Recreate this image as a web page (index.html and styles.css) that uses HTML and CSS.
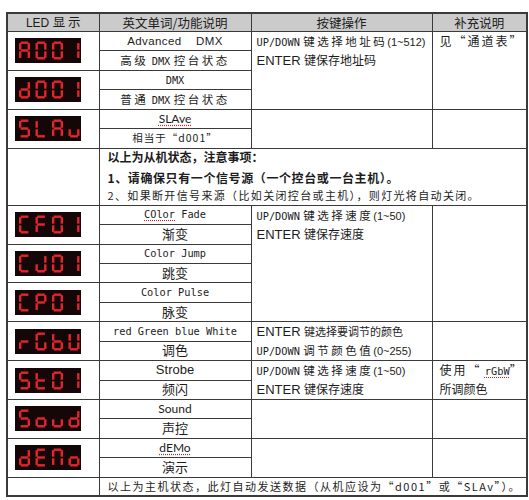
FILE: index.html
```html
<!DOCTYPE html>
<html lang="zh-CN">
<head>
<meta charset="utf-8">
<title>LED 显示</title>
<link rel="stylesheet" href="styles.css">
</head>
<body>
<svg class="defs" width="0" height="0" aria-hidden="true">
  <defs>
    <rect id="s-a" x="1.6" y="0" width="7.8" height="2.4"/>
    <rect id="s-b" x="8.6" y="1.6" width="2.4" height="6.6"/>
    <rect id="s-c" x="8.6" y="9.8" width="2.4" height="6.6"/>
    <rect id="s-d" x="1.6" y="15.6" width="7.8" height="2.4"/>
    <rect id="s-e" x="0" y="9.8" width="2.4" height="6.6"/>
    <rect id="s-f" x="0" y="1.6" width="2.4" height="6.6"/>
    <rect id="s-g" x="1.6" y="7.8" width="7.8" height="2.4"/>
    <g id="c-A"><use href="#s-a"/><use href="#s-b"/><use href="#s-c"/><use href="#s-e"/><use href="#s-f"/><use href="#s-g"/></g>
    <g id="c-0"><use href="#s-a"/><use href="#s-b"/><use href="#s-c"/><use href="#s-d"/><use href="#s-e"/><use href="#s-f"/></g>
    <g id="c-1"><use href="#s-b"/><use href="#s-c"/></g>
    <g id="c-d"><use href="#s-b"/><use href="#s-c"/><use href="#s-d"/><use href="#s-e"/><use href="#s-g"/></g>
    <g id="c-S"><use href="#s-a"/><use href="#s-c"/><use href="#s-d"/><use href="#s-f"/><use href="#s-g"/></g>
    <g id="c-L"><use href="#s-d"/><use href="#s-e"/><use href="#s-f"/></g>
    <g id="c-u"><use href="#s-c"/><use href="#s-d"/><use href="#s-e"/></g>
    <g id="c-C"><use href="#s-a"/><use href="#s-d"/><use href="#s-e"/><use href="#s-f"/></g>
    <g id="c-F"><use href="#s-a"/><use href="#s-e"/><use href="#s-f"/><use href="#s-g"/></g>
    <g id="c-J"><use href="#s-b"/><use href="#s-c"/><use href="#s-d"/><use href="#s-e"/></g>
    <g id="c-P"><use href="#s-a"/><use href="#s-b"/><use href="#s-e"/><use href="#s-f"/><use href="#s-g"/></g>
    <g id="c-r"><use href="#s-e"/><use href="#s-g"/></g>
    <g id="c-G"><use href="#s-a"/><use href="#s-c"/><use href="#s-d"/><use href="#s-e"/><use href="#s-f"/></g>
    <g id="c-b"><use href="#s-c"/><use href="#s-d"/><use href="#s-e"/><use href="#s-f"/><use href="#s-g"/></g>
    <g id="c-U"><use href="#s-b"/><use href="#s-c"/><use href="#s-d"/><use href="#s-e"/><use href="#s-f"/></g>
    <g id="c-t"><use href="#s-d"/><use href="#s-e"/><use href="#s-f"/><use href="#s-g"/></g>
    <g id="c-o"><use href="#s-c"/><use href="#s-d"/><use href="#s-e"/><use href="#s-g"/></g>
    <g id="c-E"><use href="#s-a"/><use href="#s-d"/><use href="#s-e"/><use href="#s-f"/><use href="#s-g"/></g>
    <g id="c-n"><use href="#s-a"/><use href="#s-b"/><use href="#s-c"/><use href="#s-e"/><use href="#s-f"/></g>
  </defs>
</svg>

<div class="page">
<table class="spec">
  <colgroup>
    <col class="w1"><col class="w2"><col class="w3"><col class="w4">
  </colgroup>
  <thead>
    <tr>
      <th><span class="lat">LED</span> <span class="zh">显 示</span></th>
      <th class="zh">英文单词/功能说明</th>
      <th class="zh">按键操作</th>
      <th class="zh">补充说明</th>
    </tr>
  </thead>
  <tbody>
    <tr>
      <td rowspan="2" class="led">
        <svg class="led-svg" viewBox="0 0 66 25" width="66" height="25"><rect class="led-bg" width="66" height="25"/><use href="#c-A" x="4" y="3.5"/><use href="#c-0" x="20.5" y="3.5"/><use href="#c-0" x="37" y="3.5"/><use href="#c-1" x="53.5" y="3.5"/></svg>
      </td>
      <td class="fn"><span class="adv">Advanced&nbsp;&nbsp;&nbsp;&nbsp;DMX</span></td>
      <td rowspan="4" class="op">
        <div><span class="mono">UP/DOWN</span> <span class="zh wide">键选择地址码</span><span class="num">(1~512)</span></div>
        <div><span class="enter">ENTER</span> <span class="zh">键保存地址码</span></div>
      </td>
      <td rowspan="4" class="rem"><div><span class="zh wide3">见“通道表”</span></div></td>
    </tr>
    <tr><td class="fn"><span class="zh wide">高级</span> <span class="mono">DMX</span> <span class="zh wide">控台状态</span></td></tr>
    <tr>
      <td rowspan="2" class="led">
        <svg class="led-svg" viewBox="0 0 66 25" width="66" height="25"><rect class="led-bg" width="66" height="25"/><use href="#c-d" x="4" y="3.5"/><use href="#c-0" x="20.5" y="3.5"/><use href="#c-0" x="37" y="3.5"/><use href="#c-1" x="53.5" y="3.5"/></svg>
      </td>
      <td class="fn"><span class="mono">DMX</span></td>
    </tr>
    <tr><td class="fn"><span class="zh wide">普通</span> <span class="mono">DMX</span> <span class="zh wide">控台状态</span></td></tr>
    <tr>
      <td rowspan="2" class="led">
        <svg class="led-svg" viewBox="0 0 66 25" width="66" height="25"><rect class="led-bg" width="66" height="25"/><use href="#c-S" x="4" y="3.5"/><use href="#c-L" x="20.5" y="3.5"/><use href="#c-A" x="37" y="3.5"/><use href="#c-u" x="53.5" y="3.5"/></svg>
      </td>
      <td class="fn"><span class="lato sq">SLAve</span></td>
      <td rowspan="2" class="op"></td>
      <td rowspan="2" class="rem"></td>
    </tr>
    <tr><td class="fn"><span class="zh small">相当于“d001”</span></td></tr>

    <tr class="notice">
      <td></td>
      <td colspan="3" class="msg">
        <div class="m1 zh">以上为从机状态，注意事项：</div>
        <div class="m2 zh">1、请确保只有一个信号源（一个控台或一台主机）。</div>
        <div class="m3 zh">2、如果断开信号来源（比如关闭控台或主机），则灯光将自动关闭。</div>
      </td>
    </tr>

    <tr>
      <td rowspan="2" class="led">
        <svg class="led-svg" viewBox="0 0 66 25" width="66" height="25"><rect class="led-bg" width="66" height="25"/><use href="#c-C" x="4" y="3.5"/><use href="#c-F" x="20.5" y="3.5"/><use href="#c-0" x="37" y="3.5"/><use href="#c-1" x="53.5" y="3.5"/></svg>
      </td>
      <td class="fn"><span class="mono"><span class="sq">COlor</span> Fade</span></td>
      <td rowspan="6" class="op">
        <div><span class="mono">UP/DOWN</span> <span class="zh wide">键选择速度</span><span class="num">(1~50)</span></div>
        <div><span class="enter">ENTER</span> <span class="zh">键保存速度</span></div>
      </td>
      <td rowspan="6" class="rem"></td>
    </tr>
    <tr><td class="fn"><span class="zh big">渐变</span></td></tr>
    <tr>
      <td rowspan="2" class="led">
        <svg class="led-svg" viewBox="0 0 66 25" width="66" height="25"><rect class="led-bg" width="66" height="25"/><use href="#c-C" x="4" y="3.5"/><use href="#c-J" x="20.5" y="3.5"/><use href="#c-0" x="37" y="3.5"/><use href="#c-1" x="53.5" y="3.5"/></svg>
      </td>
      <td class="fn"><span class="mono">Color Jump</span></td>
    </tr>
    <tr><td class="fn"><span class="zh big">跳变</span></td></tr>
    <tr>
      <td rowspan="2" class="led">
        <svg class="led-svg" viewBox="0 0 66 25" width="66" height="25"><rect class="led-bg" width="66" height="25"/><use href="#c-C" x="4" y="3.5"/><use href="#c-P" x="20.5" y="3.5"/><use href="#c-0" x="37" y="3.5"/><use href="#c-1" x="53.5" y="3.5"/></svg>
      </td>
      <td class="fn"><span class="mono">Color Pulse</span></td>
    </tr>
    <tr><td class="fn"><span class="zh big">脉变</span></td></tr>

    <tr>
      <td rowspan="2" class="led">
        <svg class="led-svg" viewBox="0 0 66 25" width="66" height="25"><rect class="led-bg" width="66" height="25"/><use href="#c-r" x="4" y="3.5"/><use href="#c-G" x="20.5" y="3.5"/><use href="#c-b" x="37" y="3.5"/><use href="#c-U" x="53.5" y="3.5"/></svg>
      </td>
      <td class="fn"><span class="mono">red Green blue White</span></td>
      <td rowspan="2" class="op">
        <div><span class="enter">ENTER</span> <span class="zh narrow">键选择要调节的颜色</span></div>
        <div><span class="mono">UP/DOWN</span> <span class="zh wide">调节颜色值</span><span class="num">(0~255)</span></div>
      </td>
      <td rowspan="2" class="rem"></td>
    </tr>
    <tr><td class="fn"><span class="zh big">调色</span></td></tr>

    <tr>
      <td rowspan="2" class="led">
        <svg class="led-svg" viewBox="0 0 66 25" width="66" height="25"><rect class="led-bg" width="66" height="25"/><use href="#c-S" x="4" y="3.5"/><use href="#c-t" x="20.5" y="3.5"/><use href="#c-0" x="37" y="3.5"/><use href="#c-1" x="53.5" y="3.5"/></svg>
      </td>
      <td class="fn"><span class="strobe">Strobe</span></td>
      <td rowspan="2" class="op">
        <div><span class="mono">UP/DOWN</span> <span class="zh wide">键选择速度</span><span class="num">(1~50)</span></div>
        <div><span class="enter">ENTER</span> <span class="zh">键保存速度</span></div>
      </td>
      <td rowspan="2" class="rem">
        <div><span class="zh wide3">使用“</span> <span class="mono sq">rGbW</span><span class="zh">”</span></div>
        <div><span class="zh">所调颜色</span></div>
      </td>
    </tr>
    <tr><td class="fn"><span class="zh big">频闪</span></td></tr>

    <tr>
      <td rowspan="2" class="led">
        <svg class="led-svg" viewBox="0 0 66 25" width="66" height="25"><rect class="led-bg" width="66" height="25"/><use href="#c-S" x="4" y="3.5"/><use href="#c-o" x="20.5" y="3.5"/><use href="#c-u" x="37" y="3.5"/><use href="#c-d" x="53.5" y="3.5"/></svg>
      </td>
      <td class="fn"><span class="lato">Sound</span></td>
      <td rowspan="2" class="op"></td>
      <td rowspan="2" class="rem"></td>
    </tr>
    <tr><td class="fn"><span class="zh big">声控</span></td></tr>

    <tr>
      <td rowspan="2" class="led">
        <svg class="led-svg" viewBox="0 0 66 25" width="66" height="25"><rect class="led-bg" width="66" height="25"/><use href="#c-d" x="4" y="3.5"/><use href="#c-E" x="20.5" y="3.5"/><use href="#c-n" x="37" y="3.5"/><use href="#c-o" x="53.5" y="3.5"/></svg>
      </td>
      <td class="fn"><span class="lato sq">dEMo</span></td>
      <td rowspan="2" class="op"></td>
      <td rowspan="2" class="rem"></td>
    </tr>
    <tr><td class="fn"><span class="zh big">演示</span></td></tr>

    <tr class="last">
      <td></td>
      <td colspan="3" class="msg-last"><span class="zh">以上为主机状态，此灯自动发送数据（从机应设为“d001”或“SLAv”）。</span></td>
    </tr>
  </tbody>
</table>
</div>
</body>
</html>
```

FILE: styles.css
```css
* { box-sizing: border-box; }

body {
  margin: 0;
  background: #ffffff;
  color: #1c1c1c;
  font-family: "Liberation Sans", "Noto Sans CJK SC", sans-serif;
  font-size: 12px;
}

.defs {
  display: block;
  width: 0;
  height: 0;
  overflow: hidden;
}

.page {
  padding: 12px 0 0 6px;
}

.spec {
  border-collapse: collapse;
  table-layout: fixed;
  width: 520px;
  border: 2px solid #3a3a3a;
}

.w1 { width: 92px; }
.w2 { width: 152px; }
.w3 { width: 181px; }
.w4 { width: 95px; }

.spec th,
.spec td {
  border: 1px solid #3a3a3a;
  padding: 0;
  white-space: nowrap;
  overflow: hidden;
  line-height: 15px;
}

.spec thead tr { height: 18px; }
.spec tbody tr { height: 19.45px; }
.spec tbody tr.notice { height: 57px; }
.spec tbody tr.last { height: 19px; }

.spec th {
  background: #cbcbcb;
  font-weight: normal;
  font-size: 12.5px;
  text-align: center;
  vertical-align: middle;
}

.zh {
  font-family: "Noto Sans CJK SC", sans-serif;
}

.lat {
  font-family: "Liberation Sans", sans-serif;
  font-size: 12px;
}

.led {
  vertical-align: middle;
  padding-left: 7px !important;
}

.led-svg { display: block; }
.led-bg { fill: #150707; }
.led-svg use { fill: #e3252c; }

.fn {
  text-align: center;
  vertical-align: middle;
}

.op {
  vertical-align: top;
  padding-left: 5px !important;
}
.op div { height: 18.9px; line-height: 18.9px; }

.rem {
  vertical-align: top;
  padding-left: 7px !important;
}
.rem div { height: 18.9px; line-height: 18.9px; }

.mono {
  font-family: "DejaVu Sans Mono", monospace;
  font-size: 10.3px;
}

.num {
  font-family: "Liberation Sans", sans-serif;
  font-size: 11px;
}

.enter {
  font-family: "Liberation Sans", sans-serif;
  font-size: 13px;
}

.wide { letter-spacing: 2.5px; font-size: 11.5px; }
.wide3 { letter-spacing: 2px; font-size: 12px; }
.narrow { font-size: 11px; }
.small { font-size: 10.5px; letter-spacing: 1px; }
.big { font-size: 13px; }

.adv {
  font-family: "Liberation Sans", sans-serif;
  font-size: 11.5px;
  letter-spacing: 0.4px;
}

.lato {
  font-family: "Lato", sans-serif;
  font-size: 12px;
}

.strobe {
  font-family: "Liberation Sans", sans-serif;
  font-size: 13px;
}

.sq {
  text-decoration: underline dotted #d02020;
  text-underline-offset: 2px;
}

.msg {
  vertical-align: top;
  padding-left: 8px !important;
}
.m1 { height: 16px; line-height: 16px; font-size: 12px; font-weight: bold; }
.m2 { height: 18px; line-height: 18px; font-size: 12px; font-weight: bold; letter-spacing: 0.6px; margin-top: 4px; }
.m3 { height: 17px; line-height: 17px; font-size: 11px; letter-spacing: 1.35px; }

.msg-last {
  vertical-align: middle;
  padding-left: 8px !important;
  font-size: 11px;
  letter-spacing: 1.5px;
}
```
